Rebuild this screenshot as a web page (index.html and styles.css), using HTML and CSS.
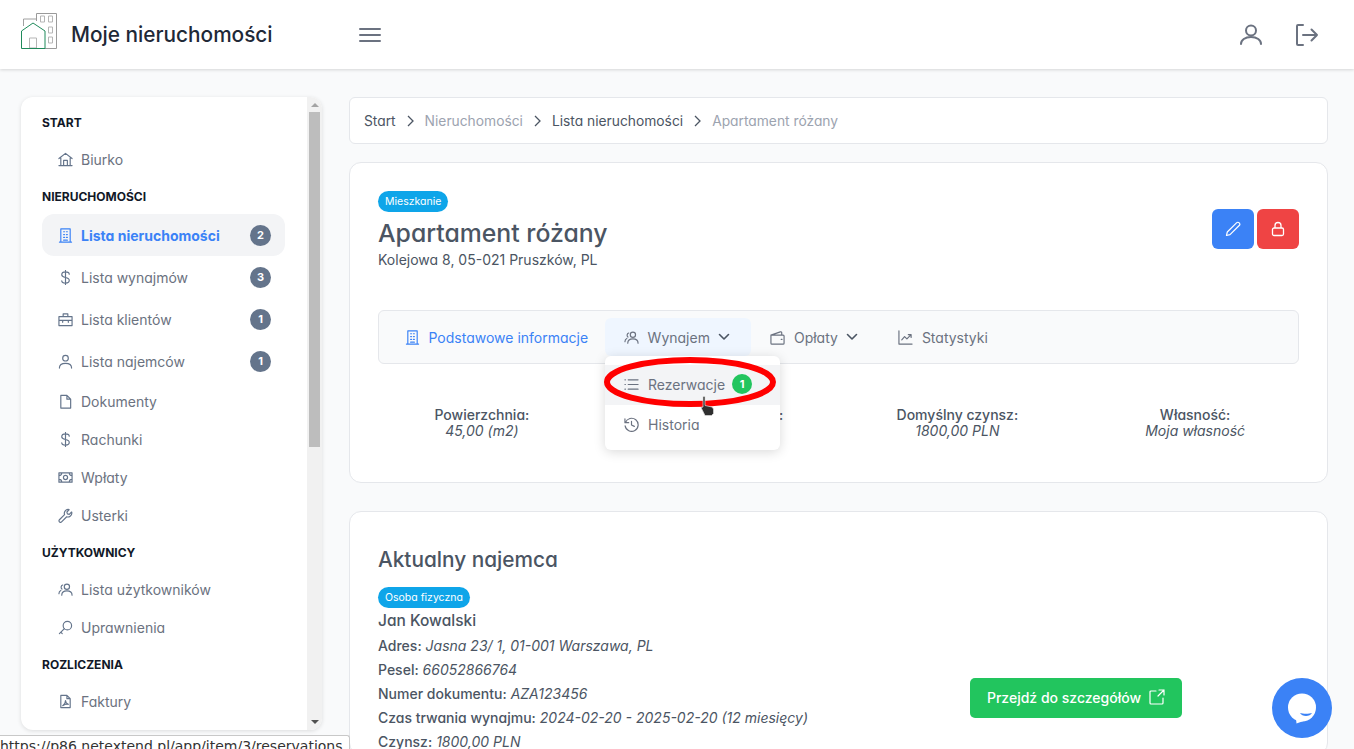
FILE: index.html
```html
<!DOCTYPE html>
<html lang="pl">
<head>
  <meta charset="UTF-8">
  <meta name="viewport" content="width=device-width, initial-scale=1.0">
  <title>Moje nieruchomości</title>
  <link rel="stylesheet" href="styles.css">
</head>
<body>
<header class="topbar">
  <div class="brand">
    <svg class="logo" viewBox="0 0 36 36" fill="none">
      <path d="M2.500 13V6H15" stroke="#a0a0a0"/>
      <path d="M15.500 8V.5h20v35H24" stroke="#9a9a9a"/>
      <path d="M19.500 3h4v6h-4zM27.500 3h4v6h-4zM27.500 14h4v6h-4zM27.500 24h4v6h-4zM8.500 25h7v10h-7z" stroke="#b5b5b5"/>
      <path d="M.5 35.500V18L12 10l12 8v17.500z" stroke="#1f8a5b"/>
    </svg>
    <span class="brand-name">Moje nieruchomości</span>
  </div>
  <button class="icon-btn burger">
    <svg width="24" height="24" viewBox="0 0 24 24" fill="none" stroke="#6b7280" stroke-width="2" stroke-linecap="round"><path d="M2 6h20M2 12h20M2 18h20"/></svg>
  </button>
  <div class="top-actions">
    <svg width="24" height="24" viewBox="0 0 24 24" fill="none" stroke="#6b7280" stroke-width="2" stroke-linecap="round"><circle cx="12" cy="7.500" r="5"/><path d="M2 21c0-4 4-7 10-7s10 3 10 7"/></svg>
    <svg width="24" height="24" viewBox="0 0 24 24" fill="none" stroke="#6b7280" stroke-width="2" stroke-linecap="round" stroke-linejoin="round"><path d="M8 2H3a1 1 0 0 0-1 1v18a1 1 0 0 0 1 1h5M8 12h14M16.500 6.500L22 12l-5.500 5.500"/></svg>
  </div>
</header>

<div class="layout">
  <aside class="sidebar">
    <nav class="side-menu">
      <div class="side-title">START</div>
      <a class="side-link">
        <svg class="side-icon" viewBox="0 0 16 16"><path d="M1 7l7-5.500L15 7M3 6v8.500h10V6M6 14.500V9h4v5.500M1 14.500h14"/></svg>
        Biurko
      </a>
      <div class="side-title">NIERUCHOMOŚCI</div>
      <a class="side-link with-badge active">
        <svg class="side-icon" viewBox="0 0 16 16"><path d="M3 1h10v14H3zM1.500 15h13M6 4h1M9 4h1M6 7h1M9 7h1M6 10h1M9 10h1M6 13h4"/></svg>
        Lista nieruchomości
        <span class="badge">2</span>
      </a>
      <a class="side-link with-badge">
        <svg class="side-icon" viewBox="0 0 16 16"><path d="M12 4.500C12 3 10.500 2 8 2S4 3 4 5s1.500 2.500 4 3 4 1 4 3-1.500 3-4 3-4-1-4-2.500M8 .5v15"/></svg>
        Lista wynajmów
        <span class="badge">3</span>
      </a>
      <a class="side-link with-badge">
        <svg class="side-icon" viewBox="0 0 16 16"><path d="M1 5h14v9.500H1zM5.500 5V2h5v3M1 9h14M5 9v2M11 9v2"/></svg>
        Lista klientów
        <span class="badge">1</span>
      </a>
      <a class="side-link with-badge">
        <svg class="side-icon" viewBox="0 0 16 16"><circle cx="8" cy="4.500" r="3"/><path d="M1.500 15c0-3.500 2.500-5 6.500-5s6.500 1.500 6.500 5"/></svg>
        Lista najemców
        <span class="badge">1</span>
      </a>
      <a class="side-link">
        <svg class="side-icon" viewBox="0 0 16 16"><path d="M3 1.500h6.500L13.500 5.500V15H3zM9.500 1.500v4h4"/></svg>
        Dokumenty
      </a>
      <a class="side-link">
        <svg class="side-icon" viewBox="0 0 16 16"><path d="M12 4.500C12 3 10.500 2 8 2S4 3 4 5s1.500 2.500 4 3 4 1 4 3-1.500 3-4 3-4-1-4-2.500M8 .5v15"/></svg>
        Rachunki
      </a>
      <a class="side-link">
        <svg class="side-icon" viewBox="0 0 16 16"><path d="M1 3h14v10H1zM1 6a3 3 0 0 0 3-3M12 3a3 3 0 0 0 3 3M1 10a3 3 0 0 1 3 3M12 13a3 3 0 0 1 3-3"/><circle cx="8" cy="8" r="2.200"/></svg>
        Wpłaty
      </a>
      <a class="side-link">
        <svg class="side-icon" viewBox="0 0 16 16"><path d="M1.500 12.500L7 7c-1-2.500 1-5.500 4-5.500l1 .3-2.500 2.500.5 2 2 .5 2.500-2.500.3 1c0 3-3 5-5.500 4l-5.500 5.500a1.300 1.300 0 0 1-2.300-2.300z"/></svg>
        Usterki
      </a>
      <div class="side-title">UŻYTKOWNICY</div>
      <a class="side-link">
        <svg class="side-icon" viewBox="0 0 16 16"><circle cx="9.500" cy="5" r="2.800"/><path d="M4 14c0-3 2-4.500 5.500-4.500S15 11 15 14M5 3.200a2.500 2.500 0 0 0-.8 4.300M1 12.500c0-2 .8-3 2-3.500"/></svg>
        Lista użytkowników
      </a>
      <a class="side-link">
        <svg class="side-icon" viewBox="0 0 16 16"><circle cx="10" cy="6" r="4.500"/><path d="M6.800 9.200L1.500 14.500M3 13l1.500 1.500"/></svg>
        Uprawnienia
      </a>
      <div class="side-title">ROZLICZENIA</div>
      <a class="side-link">
        <svg class="side-icon" viewBox="0 0 16 16"><path d="M3 1.500h6.500L13 5v9.500H3zM9.500 1.500V5H13M5 12.500c2-1 3-4 3-5.500 0 2 1.500 3.500 3 4-2-.3-4 .2-6 1.500z"/></svg>
        Faktury
      </a>
    </nav>
    <div class="side-scroll">
      <span class="arrow-up"></span>
      <span class="thumb"></span>
      <span class="arrow-down"></span>
    </div>
  </aside>

  <main class="content">
    <div class="crumbs">
      <a>Start</a>
      <svg class="crumb-sep" viewBox="0 0 9 14"><path d="M2 2l5 5-5 5"/></svg>
      <a class="muted">Nieruchomości</a>
      <svg class="crumb-sep" viewBox="0 0 9 14"><path d="M2 2l5 5-5 5"/></svg>
      <a>Lista nieruchomości</a>
      <svg class="crumb-sep" viewBox="0 0 9 14"><path d="M2 2l5 5-5 5"/></svg>
      <a class="muted">Apartament różany</a>
    </div>

    <section class="card">
      <div class="item-head">
        <div>
          <span class="pill">Mieszkanie</span>
          <h1>Apartament różany</h1>
          <p class="address">Kolejowa 8, 05-021 Pruszków, PL</p>
        </div>
        <div class="item-actions">
          <button class="square-btn blue">
            <svg width="16" height="16" viewBox="0 0 16 16" fill="none" stroke="#fff" stroke-width="1.200" stroke-linejoin="round"><path d="M1.500 14.500l.8-3.500L11.500 1.800a1.800 1.800 0 0 1 2.700 2.700L5 13.700z"/></svg>
          </button>
          <button class="square-btn red">
            <svg width="14" height="16" viewBox="0 0 14 16" fill="none" stroke="#fff" stroke-width="1.300"><rect x="1.500" y="7" width="11" height="7.500" rx="1.500"/><path d="M4 7V4.500a3 3 0 0 1 6 0V7"/></svg>
          </button>
        </div>
      </div>

      <div class="tabs">
        <a class="tab current">
          <svg class="tab-icon" viewBox="0 0 16 16"><path d="M3 1h10v14H3zM1.500 15h13M6 4h1M9 4h1M6 7h1M9 7h1M6 10h1M9 10h1M6 13h4"/></svg>
          Podstawowe informacje
        </a>
        <a class="tab open">
          <svg class="tab-icon" viewBox="0 0 16 16"><circle cx="9.500" cy="5" r="2.800"/><path d="M4 14c0-3 2-4.500 5.500-4.500S15 11 15 14M5 3.200a2.500 2.500 0 0 0-.8 4.300M1 12.500c0-2 .8-3 2-3.500"/></svg>
          Wynajem
          <svg class="chevron" viewBox="0 0 12 8"><path d="M1.500 1.500L6 6l4.500-4.500"/></svg>
        </a>
        <a class="tab">
          <svg class="tab-icon" viewBox="0 0 16 16"><path d="M1 5.500h13a1 1 0 0 1 1 1V14a1 1 0 0 1-1 1H2a1 1 0 0 1-1-1zM1 5.500L11 2c1-.3 1.500.2 1.500 1v2.500M12 10h.8"/></svg>
          Opłaty
          <svg class="chevron" viewBox="0 0 12 8"><path d="M1.500 1.500L6 6l4.500-4.500"/></svg>
        </a>
        <a class="tab">
          <svg class="tab-icon" viewBox="0 0 16 16"><path d="M1 1v14h14M4 10.500L7 7l2.500 2.500L14 5M11 5h3v3"/></svg>
          Statystyki
        </a>
      </div>

      <div class="stats">
        <div><b>Powierzchnia:</b><i>45,00 (m2)</i></div>
        <div class="covered"><b>Stan wykończenia:</b></div>
        <div><b>Domyślny czynsz:</b><i>1800,00 PLN</i></div>
        <div><b>Własność:</b><i>Moja własność</i></div>
      </div>
    </section>

    <section class="card tenant">
      <h2>Aktualny najemca</h2>
      <div class="tenant-row">
        <div class="tenant-info">
          <span class="pill">Osoba fizyczna</span>
          <div class="tenant-name">Jan Kowalski</div>
          <p><b>Adres:</b> <i>Jasna 23/ 1, 01-001 Warszawa, PL</i></p>
          <p><b>Pesel:</b> <i>66052866764</i></p>
          <p><b>Numer dokumentu:</b> <i>AZA123456</i></p>
          <p><b>Czas trwania wynajmu:</b> <i>2024-02-20 - 2025-02-20 (12 miesięcy)</i></p>
          <p><b>Czynsz:</b> <i>1800,00 PLN</i></p>
        </div>
        <a class="details-btn">
          Przejdź do szczegółów
          <svg width="16" height="16" viewBox="0 0 16 16" fill="none" stroke="#fff" stroke-width="1.200" stroke-linecap="round" stroke-linejoin="round"><path d="M7 2H2a1 1 0 0 0-1 1v11a1 1 0 0 0 1 1h11a1 1 0 0 0 1-1V9M9 7l6-6M10 1h5v5"/></svg>
        </a>
      </div>
    </section>
  </main>
</div>

<!-- dropdown opened from the Wynajem tab -->
<div class="dropdown">
  <a class="drop-item hover">
    <svg class="tab-icon" viewBox="0 0 16 16"><path d="M1 3h.5M1 8h.5M1 13h.5M4.500 3H15M4.500 8H15M4.500 13H15"/></svg>
    Rezerwacje
    <span class="badge green">1</span>
  </a>
  <a class="drop-item">
    <svg class="tab-icon" viewBox="0 0 16 16"><path d="M1 2v4h4M1.500 6a7 7 0 1 1-.3 3.500M8 4.500V8.500l3 1.500"/></svg>
    Historia
  </a>
</div>

<svg class="annotation" width="180" height="56" viewBox="0 0 180 56" fill="none"><ellipse cx="90" cy="28" rx="83" ry="22" stroke="#f00" stroke-width="6"/></svg>

<svg class="hand" width="16" height="20" viewBox="0 0 16 20"><path d="M3 0.500h2v9l7 1.500 1.500 2v4.500l-2 2H5L1 11.500 3 11z" fill="#2f2f2f" stroke="#ddd" stroke-width=".7"/></svg>

<div class="status-url">https://p86.netextend.pl/app/item/3/reservations</div>

<div class="chat">
  <svg width="40" height="40" viewBox="0 0 40 40"><circle cx="20" cy="19.500" r="14" fill="#fff"/><path d="M14 30l.5 5.500 7-2.500z" fill="#fff"/><path d="M18 25c3 1 9 1 12 0-2 4-10 4-12 0z" fill="#3b82f6"/></svg>
</div>
</body>
</html>
```

FILE: styles.css
```css
* {
  box-sizing: border-box;
}
html, body {
  height: 100%;
  margin: 0;
  overflow: hidden;
}
body {
  background-color: #f9fafb;
  color: #4b5563;
  font-family: Inter, sans-serif;
  font-feature-settings: "cv11";
  font-size: 14px;
}
a {
  text-decoration: none;
}
svg {
  flex: none;
}

/* top bar */
.topbar {
  display: flex;
  align-items: center;
  height: 69px;
  padding: 0 21px;
  background-color: #fff;
  box-shadow: 0 1px 3px rgba(0, 0, 0, 0.15);
}
.brand {
  display: flex;
  align-items: center;
  gap: 14px;
  width: 337px;
}
.logo {
  width: 36px;
  height: 36px;
  margin-top: -7px;
}
.brand-name {
  color: #1f2937;
  font-size: 20.800px;
  font-weight: 500;
}
.icon-btn {
  display: flex;
  padding: 0;
  border: none;
  background: none;
}
.top-actions {
  display: flex;
  gap: 32px;
  margin-left: auto;
  padding-right: 14px;
}

.layout {
  display: flex;
  gap: 27px;
  padding: 28px 26px 0 21px;
}

/* sidebar */
.sidebar {
  display: flex;
  flex: none;
  width: 301px;
  height: 633px;
  overflow: hidden;
  border-radius: 12px;
  background-color: #fff;
  box-shadow: 0 1px 4px rgba(0, 0, 0, 0.12);
}
.side-menu {
  flex: 1;
  padding: 7px 22px 0 21px;
}
.side-title {
  display: flex;
  align-items: center;
  height: 18px;
  margin: 9px 0;
  color: #111827;
  font-size: 12px;
  font-weight: 700;
}
.side-link {
  display: flex;
  align-items: center;
  gap: 8px;
  height: 38px;
  padding: 0 14px 0 16px;
  color: #6b7280;
}
.side-link.with-badge {
  height: 42px;
  border-radius: 12px;
}
.side-link.active {
  background-color: #f3f4f6;
  color: #3b82f6;
  font-weight: 700;
}
.side-icon, .tab-icon {
  width: 15px;
  height: 15px;
  fill: none;
  stroke: currentColor;
  stroke-width: 1.250;
  stroke-linecap: round;
  stroke-linejoin: round;
}
.side-link .side-icon {
  color: #64748b;
}
.side-link.active .side-icon {
  color: #3b82f6;
}
.badge {
  display: flex;
  align-items: center;
  justify-content: center;
  width: 21px;
  height: 21px;
  margin-left: auto;
  border-radius: 50%;
  background-color: #64748b;
  color: #fff;
  font-size: 11px;
  font-weight: 700;
}
.badge.green {
  width: 20px;
  height: 20px;
  margin-left: -2px;
  background-color: #22c55e;
}
.side-scroll {
  display: flex;
  flex: none;
  flex-direction: column;
  align-items: center;
  width: 15px;
  background-color: #f1f1f1;
}
.thumb {
  width: 11px;
  height: 335px;
  margin-top: 5px;
  background-color: #bdbdbd;
}
.arrow-up, .arrow-down {
  width: 0;
  height: 0;
  border-left: 4px solid transparent;
  border-right: 4px solid transparent;
}
.arrow-up {
  margin-top: 6px;
  border-bottom: 4px solid #a3a3a3;
}
.arrow-down {
  margin-top: auto;
  margin-bottom: 6px;
  border-top: 4px solid #505050;
}

/* main column */
.content {
  flex: 1;
  min-width: 0;
}
.crumbs {
  display: flex;
  align-items: center;
  gap: 10px;
  height: 47px;
  padding: 0 14px;
  margin-bottom: 18px;
  border: 1px solid #e5e7eb;
  border-radius: 6px;
  background-color: #fff;
  font-size: 13.800px;
}
.crumbs .muted {
  color: #9ca3af;
}
.crumb-sep {
  width: 9px;
  height: 14px;
  fill: none;
  stroke: #4b5563;
  stroke-width: 1.300;
}
.card {
  padding: 28px 28px 0;
  margin-bottom: 28px;
  border: 1px solid #e5e7eb;
  border-radius: 12px;
  background-color: #fff;
}
.item-head {
  display: flex;
  align-items: flex-start;
  justify-content: space-between;
}
.pill {
  display: inline-block;
  height: 21px;
  padding: 0 7px;
  border-radius: 11px;
  background-color: #0ea5e9;
  color: #fff;
  font-size: 10.500px;
  line-height: 21px;
  vertical-align: top;
}
h1 {
  margin: 5px 0 0;
  color: #4b5563;
  font-size: 24.800px;
  font-weight: 500;
  line-height: 32px;
}
.address {
  margin: 1px 0 0;
  color: #4b5563;
  font-size: 14px;
  line-height: 20px;
}
.item-actions {
  display: flex;
  gap: 3px;
  margin-top: 18px;
}
.square-btn {
  display: flex;
  align-items: center;
  justify-content: center;
  width: 42px;
  height: 40px;
  padding: 0;
  border: none;
  border-radius: 6px;
}
.square-btn.blue {
  background-color: #3b82f6;
}
.square-btn.red {
  background-color: #ef4444;
}
.tabs {
  display: flex;
  align-items: center;
  height: 54px;
  margin-top: 40px;
  padding-left: 7px;
  border: 1px solid #e5e7eb;
  border-radius: 6px;
  background-color: #f9fafb;
}
.tab {
  display: flex;
  align-items: center;
  gap: 8.500px;
  height: 38px;
  padding: 0 21px 0 19px;
  border-radius: 6px;
  color: #6b7280;
}
.tab.current {
  padding-right: 17px;
  color: #3b82f6;
}
.tab.open {
  background-color: #eff6ff;
}
.chevron {
  width: 12px;
  height: 8px;
  fill: none;
  stroke: #4b5563;
  stroke-width: 1.600;
  stroke-linecap: round;
  stroke-linejoin: round;
}
.stats {
  display: grid;
  grid-template-columns: repeat(4, 1fr);
  margin: 43px -15px 0;
  padding-bottom: 43px;
  text-align: center;
}
.stats b, .stats i {
  display: block;
  line-height: 16px;
}
.stats b {
  font-weight: 500;
}
.tenant {
  padding-top: 33px;
}
h2 {
  margin: 0 0 12px;
  color: #4b5563;
  font-size: 20.800px;
  font-weight: 500;
  line-height: 30px;
}
.tenant-row {
  display: flex;
}
.tenant-info {
  width: 592px;
}
.tenant-info .pill {
  display: block;
  width: fit-content;
}
.tenant-name {
  margin: 2px 0 2px;
  font-size: 15.500px;
  font-weight: 500;
  line-height: 22px;
}
.tenant-info p {
  margin: 0;
  font-size: 14px;
  line-height: 24px;
}
.tenant-info b {
  font-weight: 500;
}
.details-btn {
  display: flex;
  align-items: center;
  justify-content: center;
  gap: 8px;
  width: 212px;
  height: 40px;
  margin-top: 91px;
  padding-bottom: 2px;
  border-radius: 5px;
  background-color: #22c55e;
  color: #fff;
  font-weight: 500;
}

/* things lying over the page */
.dropdown {
  position: absolute;
  left: 605px;
  top: 356px;
  width: 175px;
  height: 94px;
  padding-top: 9px;
  border-radius: 6px;
  background-color: #fff;
  box-shadow: 0 2px 12px rgba(0, 0, 0, 0.15);
}
.drop-item {
  display: flex;
  align-items: center;
  gap: 9px;
  height: 40px;
  padding: 0 19px 2px;
  color: #6b7280;
}
.drop-item.hover {
  background-color: #f3f4f6;
}
.annotation {
  position: absolute;
  left: 600px;
  top: 354px;
}
.hand {
  position: absolute;
  left: 700px;
  top: 396px;
}
.status-url {
  position: absolute;
  left: 0;
  bottom: 0;
  width: 350px;
  height: 14px;
  overflow: hidden;
  border: 1px solid #c8c8c8;
  border-left: none;
  border-bottom: none;
  border-top-right-radius: 3px;
  background-color: #fff;
  color: #333;
  font-family: "DejaVu Sans", sans-serif;
  font-feature-settings: normal;
  font-size: 14px;
  line-height: 20px;
  white-space: nowrap;
}
.chat {
  position: fixed;
  right: 22px;
  bottom: 11px;
  display: flex;
  align-items: center;
  justify-content: center;
  width: 60px;
  height: 60px;
  border-radius: 50%;
  background-color: #3b82f6;
}
```
